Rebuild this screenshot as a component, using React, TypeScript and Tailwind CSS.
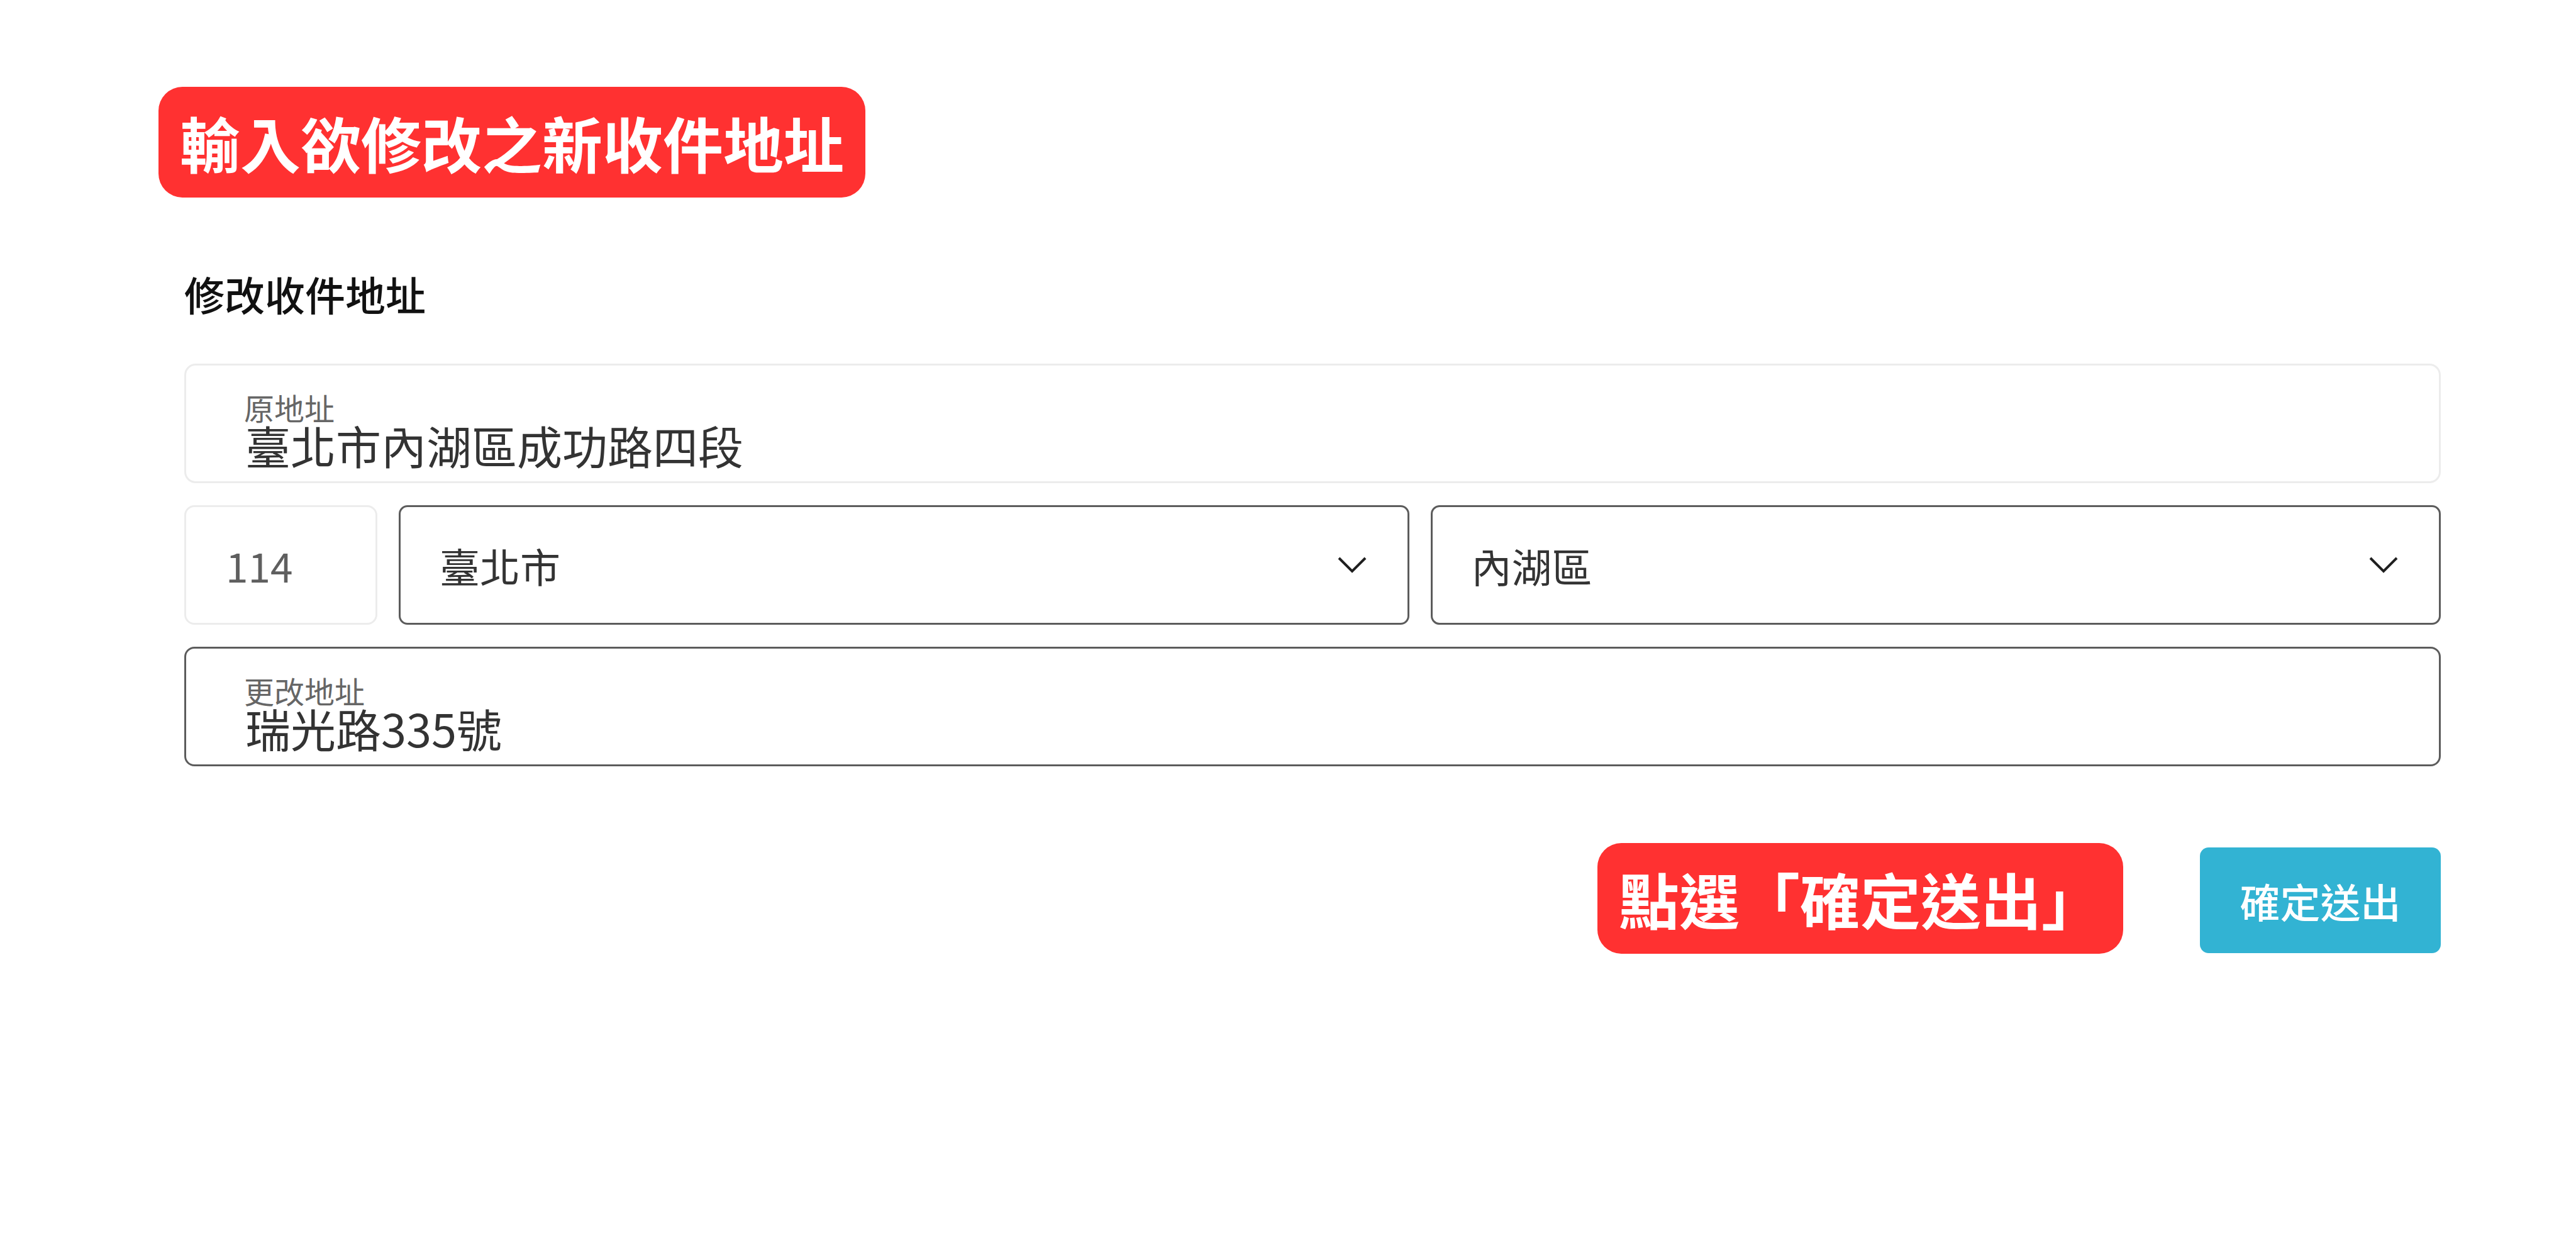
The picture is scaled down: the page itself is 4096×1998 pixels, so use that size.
import React from "react";

function Chevron() {
  return (
    <svg width="46" height="26" viewBox="0 0 46 26" fill="none" className="shrink-0">
      <polyline points="2,2 23,23 44,2" stroke="#1f1f1f" strokeWidth="4" strokeLinejoin="miter" fill="none" />
    </svg>
  );
}

function FloatField({ label, value, dark }: { label: string; value: string; dark?: boolean }) {
  return (
    <div
      className={
        dark
          ? "h-[190px] rounded-[16px] border-[3px] border-[#5c5c5c] pl-[92px] pt-[42px] flex flex-col"
          : "h-[190px] rounded-[18px] border-[3px] border-[#ececec] pl-[92px] pt-[42px] flex flex-col"
      }
    >
      <span className="text-[48px] leading-[48px] text-[#666666]">{label}</span>
      <span className="text-[72px] leading-[72px] text-[#333333] pl-[2px]">{value}</span>
    </div>
  );
}

function SelectBox({ value }: { value: string }) {
  return (
    <div className="flex-1 h-full rounded-[14px] border-[3px] border-[#5c5c5c] flex items-center justify-between pl-[62px] pr-[65px]">
      <span className="text-[64px] leading-none text-[#333333]">{value}</span>
      <Chevron />
    </div>
  );
}

export default function App() {
  return (
    <div className="w-full min-h-[1998px] bg-white font-['Noto_Sans_CJK_TC','Noto_Sans_CJK_SC',sans-serif]">
      <div className="pt-[138px] pl-[252px] pr-[215px] flex flex-col items-start">
        <div className="h-[176px] px-[34px] rounded-[38px] bg-[#ff3131] flex items-center">
          <span className="text-[96px] leading-none font-bold text-white">輸入欲修改之新收件地址</span>
        </div>

        <div className="ml-[41px] self-stretch flex flex-col">
          <h1 className="mt-[120px] text-[64px] leading-[64px] font-medium text-[#111111]">修改收件地址</h1>

          <div className="mt-[80px]">
            <FloatField label="原地址" value="臺北市內湖區成功路四段" />
          </div>

          <div className="mt-[35px] h-[190px] flex gap-[34px]">
            <div className="w-[307px] h-full rounded-[16px] border-[3px] border-[#ececec] flex items-center pl-[63px]">
              <span className="text-[64px] leading-none text-[#5f5f5f]">114</span>
            </div>
            <SelectBox value="臺北市" />
            <SelectBox value="內湖區" />
          </div>

          <div className="mt-[35px]">
            <FloatField label="更改地址" value="瑞光路335號" dark />
          </div>

          <div className="mt-[122px] flex justify-end items-end gap-[122px]">
            <div className="h-[176px] px-[34px] rounded-[38px] bg-[#ff3131] flex items-center">
              <span className="text-[96px] leading-none font-bold text-white">點選「確定送出」</span>
            </div>
            <button className="mb-[1px] h-[168px] w-[383px] rounded-[14px] bg-[#32b3d3] flex items-center justify-center">
              <span className="text-[64px] leading-none font-medium text-white">確定送出</span>
            </button>
          </div>
        </div>
      </div>
    </div>
  );
}
